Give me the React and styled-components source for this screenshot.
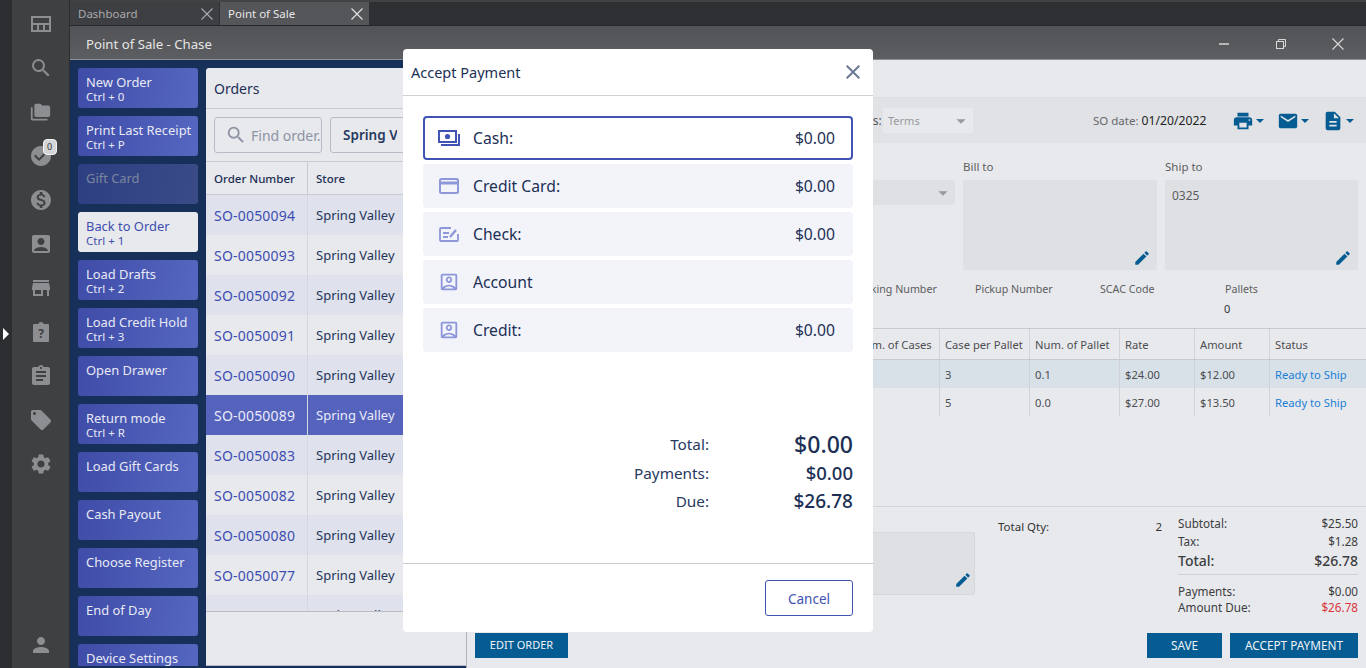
import styled, { createGlobalStyle } from "styled-components";
import {
  MdSearch, MdFolderCopy, MdCheckCircle, MdMonetizationOn, MdAccountBox, MdStore,
  MdAssignment, MdLocalOffer, MdSettings, MdPerson, MdClose, MdEdit, MdPrint, MdEmail,
  MdDescription, MdArrowDropDown, MdOutlineAccountBox
} from "react-icons/md";

const GlobalStyle = createGlobalStyle`
  html, body { margin: 0; padding: 0; overflow: hidden; background: #16305a; }
  * { box-sizing: border-box; }
  body { font-family: "Noto Sans", "Open Sans", sans-serif; }
`

const Page = styled.div`
  display: flex;
  width: 1366px;
  height: 668px;
  overflow: hidden;
  position: relative;
`
const Strip = styled.div`
  width: 12px;
  background: #2d2e32;
  position: relative;
`
const Arrow = styled.div`
  position: absolute;
  left: 3px;
  top: 328px;
  border-left: 6px solid #fff;
  border-top: 6px solid transparent;
  border-bottom: 6px solid transparent;
`
const Sidebar = styled.nav`
  width: 58px;
  background: #3f4042;
  border-right: 1px solid #2c2d30;
  display: flex;
  flex-direction: column;
  align-items: center;
  padding-top: 2px;
  color: #8d8e91;
`
const SideItem = styled.div`
  height: 44px;
  width: 44px;
  display: flex;
  align-items: center;
  justify-content: center;
  position: relative;
  font-size: 24px;
  margin-top: ${p => (p.$bottom ? "auto" : "0")};
  margin-bottom: ${p => (p.$bottom ? "1px" : "0")};
`
const Badge = styled.span`
  position: absolute;
  left: 24px;
  top: 5px;
  width: 14px;
  height: 16px;
  border-radius: 4px;
  background: #d4d5d8;
  border: 1px solid #f2f2f2;
  color: #333;
  font-size: 9px;
  line-height: 14px;
  text-align: center;
`
const Work = styled.div`
  flex: 1;
  display: flex;
  flex-direction: column;
  min-width: 0;
`
const TabBar = styled.div`
  height: 26px;
  background: #2f3034;
  border-top: 2px solid #424345;
  display: flex;
  border-bottom: 1px solid #26272a;
`
const Tab = styled.div`
  width: 149px;
  margin-right: 1px;
  background: ${p => (p.$active ? "#55565a" : "#3e3f42")};
  color: ${p => (p.$active ? "#e6e6e6" : "#a9aaad")};
  font-size: 11.5px;
  display: flex;
  align-items: center;
  justify-content: space-between;
  padding: 0 6px 0 8px;
`
const TitleBar = styled.div`
  height: 34px;
  background: linear-gradient(180deg, #525356, #5d5e61);
  color: #e6e6e6;
  font-size: 13.2px;
  display: flex;
  align-items: center;
  padding: 2px 0 0 16px;
  border-bottom: 1px solid #8f9093;
`
const WindowControls = styled.div`
  margin-left: auto;
  display: flex;
  align-items: center;
  gap: 45px;
  padding-right: 22px;
  color: #d8d8d8;
`
const Body = styled.div`
  flex: 1;
  display: flex;
  min-height: 0;
`
const ActionColumn = styled.div`
  width: 136px;
  height: 606px;
  overflow: hidden;
  padding: 8px 8px 0;
  background: #16305a;
`
const ActionButton = styled.div`
  height: 40px;
  margin-bottom: 8px;
  border-radius: 3px;
  padding: 6px 8px;
  white-space: nowrap;
  background: ${p => p.$active ? "#e8e9ed" : p.$disabled
    ? "linear-gradient(100deg, #2d3f82, #3a4b88)"
    : "linear-gradient(100deg, #3f4ca8, #5567c1)"};
  color: ${p => p.$active ? "#3e4eb0" : p.$disabled ? "#7c859e" : "#e8e9f4"};
  font-size: 12.9px;
  line-height: 16px;
`
const Shortcut = styled.div`
  font-size: 11.5px;
  line-height: 13px;
`
const OrdersWrap = styled.div`
  width: 260px;
  height: 608px;
  padding-top: 8px;
  background: #16305a;
  padding-bottom: 2px;
  display: flex;
`
const OrdersPanel = styled.section`
  width: 260px;
  flex: none;
  background: #e8e9ed;
  border-radius: 3px 0 0 0;
  border-bottom: 1px solid #b9bcc6;
  display: flex;
  flex-direction: column;
`
const OrdersTitle = styled.div`
  height: 41px;
  border-bottom: 1px solid #c9cbd3;
  padding-left: 8px;
  display: flex;
  align-items: center;
  font-size: 14px;
  color: #1c2f55;
`
const SearchRow = styled.div`
  height: 53px;
  padding: 8px 8px 0;
  display: flex;
  gap: 8px;
  border-bottom: 1px solid #c9cbd3;
`
const SearchBox = styled.div`
  width: 108px;
  flex: none;
  height: 36px;
  border: 1px solid #b8bcc8;
  border-radius: 3px;
  display: flex;
  align-items: center;
  padding-left: 10px;
  gap: 4px;
  color: #8d93a5;
  font-size: 14px;
  white-space: nowrap;
  overflow: hidden;
`
const StoreSelect = styled.div`
  width: 150px;
  flex: none;
  height: 36px;
  border: 1px solid #b8bcc8;
  border-radius: 3px;
  padding-left: 12px;
  display: flex;
  align-items: center;
`
const StoreText = styled.span`
  width: 54px;
  overflow: hidden;
  white-space: nowrap;
  color: #26395f;
  font-weight: 600;
  font-size: 13.5px;
`
const OrderHead = styled.div`
  display: grid;
  grid-template-columns: 101px 1fr;
  height: 33px;
  border-bottom: 1px solid #c9cbd3;
  font-size: 11.5px;
  font-weight: 500;
  color: #1c2f55;
`
const OrderHeadCell = styled.div`
  display: flex;
  align-items: center;
  padding-left: 8px;
  & + & { border-left: 1px solid #c9cbd3; }
`
const OrderList = styled.div`
  height: 417px;
  overflow: hidden;
  border-bottom: 1px solid #b9bcc6;
`
const OrderRow = styled.div`
  display: grid;
  grid-template-columns: 101px 1fr;
  height: 40px;
  font-size: 13px;
  background: ${p => (p.$selected ? "#5663bd" : p.$odd ? "#dfe1ec" : "#e8e9ed")};
  color: ${p => (p.$selected ? "#e9ebfa" : "#22355b")};
`
const OrderCell = styled.div`
  display: flex;
  align-items: center;
  padding-left: 8px;
  & + & { border-left: 1px solid #d5d7df; }
`
const OrderLink = styled.span`
  color: ${p => (p.$selected ? "#e9ebfa" : "#3e4eb0")};
  font-size: 14px;
  letter-spacing: 0.2px;
`
const Main = styled.main`
  flex: 1;
  min-width: 0;
  background: #e8e9ed;
  border-left: 1px solid #b2b3b7;
  display: flex;
  flex-direction: column;
  font-size: 12px;
  color: #4c4d50;
`
const TopStrip = styled.div`
  height: 37px;
`
const Toolbar = styled.div`
  height: 46px;
  background: #e1e2e6;
  display: flex;
  align-items: center;
  padding-left: 377px;
  border-top: 1px solid #dcdde1;
`
const TermsLabel = styled.span`
  width: 39px;
  flex: none;
  font-size: 12px;
  color: #57585b;
`
const Select = styled.div`
  height: 25px;
  flex: none;
  background: ${p => (p.$dark ? "#dfe0e4" : "#e8e9ed")};
  border-radius: 2px;
  color: #98999d;
  font-size: 11px;
  display: flex;
  align-items: center;
  justify-content: space-between;
  padding: 0 1px 0 5px;
  width: ${p => p.$width}px;
`
const DateLabel = styled.div`
  margin-left: 120px;
  width: 139px;
  flex: none;
  font-size: 11.5px;
  color: #66676a;
`
const DateValue = styled.span`
  color: #222;
  font-size: 12.2px;
`
const ToolIcon = styled.div`
  display: flex;
  align-items: center;
  flex: none;
  color: #045c92;
  font-size: 22px;
  width: 45px;
`
const Caret = styled.span`
  display: inline-block;
  margin-left: 2px;
  border-left: 4px solid transparent;
  border-right: 4px solid transparent;
  border-top: 4px solid #045c92;
`
const AddressGrid = styled.div`
  display: grid;
  grid-template-columns: 488px 194px 193px;
  gap: 8px;
  padding-top: 16px;
`
const AddressLabel = styled.div`
  font-size: 11.5px;
  line-height: 16px;
  height: 21px;
  color: #5c5d60;
`
const AddressBox = styled.div`
  height: 90px;
  background: #dfe0e4;
  position: relative;
  padding: 7px;
  font-size: 12px;
  color: #5c5d60;
`
const PencilSpot = styled.span`
  position: absolute;
  right: ${p => p.$right ?? 6}px;
  bottom: ${p => p.$bottom ?? 3}px;
  color: #045c92;
  font-size: 18px;
  display: flex;
`
const FieldGrid = styled.div`
  display: grid;
  grid-template-columns: repeat(4, 125px);
  padding: 11px 0 0 383px;
  height: 58px;
  font-size: 10.7px;
  line-height: 16px;
  color: #5c5d60;
`
const FieldValue = styled.div`
  margin: 4px 0 0 -1px;
  font-size: 11px;
  color: #333;
`
const TableRow = styled.div`
  display: grid;
  grid-template-columns: 383px 89px 90px 90px 75px 75px 96px;
  height: ${p => (p.$head ? "32px" : "28px")};
  background: ${p => (p.$tint ? "#d8e1e8" : "transparent")};
  border-top: ${p => (p.$head ? "1px solid #c9cacf" : "0")};
  border-bottom: ${p => (p.$head ? "1px solid #c9cacf" : "0")};
  font-size: 11.2px;
`
const TableCell = styled.div`
  display: flex;
  align-items: center;
  padding-left: 5px;
  white-space: nowrap;
  color: ${p => (p.$link ? "#1a7fd6" : "#4c4d50")};
  & + & { border-left: 1px solid #d2d3d8; }
`
const TableGap = styled.div`
  flex: 1;
`
const BottomPanel = styled.div`
  height: 124px;
  border-top: 1px solid #d2d3d8;
  display: flex;
  padding-right: 8px;
`
const NotesColumn = styled.div`
  width: 508px;
  padding-top: 25px;
`
const NotesBox = styled.div`
  height: 63px;
  background: #dfe0e4;
  border: 1px solid #d6d7db;
  border-radius: 2px;
  position: relative;
`
const QtyBlock = styled.div`
  width: 203px;
  padding: 12px 16px 0 23px;
  display: flex;
  justify-content: space-between;
  font-size: 11.5px;
  color: #333;
`
const Summary = styled.div`
  flex: 1;
  padding-top: 7px;
`
const SummaryRow = styled.div`
  display: flex;
  justify-content: space-between;
  align-items: center;
  height: ${p => (p.$big ? "21px" : p.$tight ? "16px" : "18px")};
  font-size: ${p => (p.$big ? "14px" : "11.7px")};
  font-weight: ${p => (p.$big ? 500 : 400)};
  color: #3c3d40;
`
const Red = styled.span`
  color: #d8343c;
`
const SummaryRule = styled.div`
  height: 1px;
  background: #cfd0d5;
  margin: 3px 0 8px;
`
const Footer = styled.div`
  height: 38px;
  padding: 3px 8px 0;
  display: flex;
  gap: 8px;
`
const SolidButton = styled.div`
  height: 25px;
  width: ${p => p.$width}px;
  margin-right: ${p => (p.$push ? "auto" : "0")};
  padding-bottom: 2px;
  background: #045c92;
  color: #eef3f7;
  font-size: ${p => (p.$push ? "11px" : "11.8px")};
  display: flex;
  align-items: center;
  justify-content: center;
`
const Modal = styled.div`
  position: absolute;
  left: 403px;
  top: 49px;
  width: 470px;
  height: 583px;
  background: #fff;
  border-radius: 4px;
  display: flex;
  flex-direction: column;
  color: #1c2f55;
`
const ModalHeader = styled.header`
  height: 47px;
  border-bottom: 1px solid #d0d2d8;
  display: flex;
  align-items: center;
  justify-content: space-between;
  padding: 0 8px;
  font-size: 14.5px;
  color: #1c2f55;
`
const CloseIcon = styled.span`
  display: flex;
  font-size: 24px;
  color: #6b7a90;
`
const PaymentList = styled.div`
  padding: 20px 20px 0;
  display: flex;
  flex-direction: column;
  gap: 4px;
`
const PaymentRow = styled.div`
  height: 44px;
  border-radius: 4px;
  background: ${p => (p.$active ? "#fff" : "#f3f4fa")};
  border: ${p => (p.$active ? "2px solid #4153b3" : "0")};
  display: flex;
  align-items: center;
  padding: ${p => (p.$active ? "0 16px 0 13px" : "0 18px 0 15px")};
  font-size: 15.7px;
`
const PayIcon = styled.span`
  width: 22px;
  margin-right: 13px;
  display: flex;
  justify-content: center;
  color: ${p => (p.$active ? "#4153b3" : "#8e97d9")};
`
const PayAmount = styled.span`
  margin-left: auto;
`
const Totals = styled.div`
  margin-top: 76px;
  padding-right: 20px;
  display: flex;
  flex-direction: column;
  flex: 1;
`
const TotalRow = styled.div`
  display: grid;
  grid-template-columns: 306px 1fr;
  align-items: center;
  height: ${p => p.$height}px;
  font-size: 15.3px;
`
const TotalLabel = styled.div`
  text-align: right;
  color: #26395f;
`
const TotalValue = styled.div`
  text-align: right;
  font-size: ${p => p.$size}px;
  font-weight: 500;
`
const ModalFooter = styled.footer`
  height: 69px;
  border-top: 1px solid #c8cad0;
  padding: 16px 20px 0;
  display: flex;
  justify-content: flex-end;
`
const CancelButton = styled.div`
  width: 88px;
  height: 36px;
  border: 1px solid #4153b3;
  border-radius: 3px;
  color: #4153b3;
  font-size: 13.5px;
  padding-top: 2px;
  display: flex;
  align-items: center;
  justify-content: center;
`

function QuiltIcon() {
  return (
    <svg width="20" height="16" viewBox="0 0 20 16" fill="none" stroke="currentColor" strokeWidth="2">
      <rect x="1" y="1" width="18" height="14" />
      <path d="M1 8h18M7 8v7M13 8v7" />
    </svg>
  );
}

function QuestionClip() {
  return (
    <svg width="24" height="24" viewBox="0 0 24 24" fill="currentColor">
      <path d="M5 4h4.2a3 3 0 0 1 5.6 0H19a1 1 0 0 1 1 1v16a1 1 0 0 1-1 1H5a1 1 0 0 1-1-1V5a1 1 0 0 1 1-1z" />
      <text x="12" y="18" fontSize="12" fontWeight="700" textAnchor="middle" fill="#3f4042">?</text>
    </svg>
  );
}

function CashIcon() {
  return (
    <svg width="22" height="16" viewBox="0 0 22 16" fill="none" stroke="currentColor" strokeWidth="2">
      <rect x="1" y="1" width="17" height="11" />
      <circle cx="9.5" cy="6.5" r="2.6" fill="currentColor" stroke="none" />
      <path d="M3 15h18V4" />
    </svg>
  );
}

function CardIcon() {
  return (
    <svg width="20" height="16" viewBox="0 0 20 16" fill="none" stroke="currentColor" strokeWidth="2">
      <rect x="1" y="1" width="18" height="14" rx="1.5" />
      <path d="M1 5h18" strokeWidth="3" />
    </svg>
  );
}

function CheckIcon() {
  return (
    <svg width="20" height="15" viewBox="0 0 20 15" fill="none" stroke="currentColor" strokeWidth="1.8">
      <path d="M12 1H2a1 1 0 0 0-1 1v11a1 1 0 0 0 1 1h16a1 1 0 0 0 1-1V7" />
      <path d="M4 6h6M4 10h5" />
      <path d="M11 10l6-7" strokeWidth="2.4" />
    </svg>
  );
}

function ThinClose() {
  return (
    <svg width="12" height="12" viewBox="0 0 12 12" stroke="currentColor" fill="none">
      <path d="M0.5 0.5l11 11M11.5 0.5l-11 11" strokeWidth="1.1" />
    </svg>
  );
}

const actions = [
  { title: "New Order", shortcut: "Ctrl + 0" },
  { title: "Print Last Receipt", shortcut: "Ctrl + P" },
  { title: "Gift Card", disabled: true },
  { title: "Back to Order", shortcut: "Ctrl + 1", active: true },
  { title: "Load Drafts", shortcut: "Ctrl + 2" },
  { title: "Load Credit Hold", shortcut: "Ctrl + 3" },
  { title: "Open Drawer" },
  { title: "Return mode", shortcut: "Ctrl + R" },
  { title: "Load Gift Cards" },
  { title: "Cash Payout" },
  { title: "Choose Register" },
  { title: "End of Day" },
  { title: "Device Settings" },
];

const orders = ["0094", "0093", "0092", "0091", "0090", "0089", "0083", "0082", "0080", "0077", "0055"];

const payments = [
  { label: "Cash:", amount: "$0.00", icon: <CashIcon />, active: true },
  { label: "Credit Card:", amount: "$0.00", icon: <CardIcon /> },
  { label: "Check:", amount: "$0.00", icon: <CheckIcon /> },
  { label: "Account", icon: <MdOutlineAccountBox size={22} /> },
  { label: "Credit:", amount: "$0.00", icon: <MdOutlineAccountBox size={22} /> },
];

const lines = [
  ["3", "0.1", "$24.00", "$12.00"],
  ["5", "0.0", "$27.00", "$13.50"],
];

function App() {
  return (
    <Page>
      <GlobalStyle />
      <Strip><Arrow /></Strip>
      <Sidebar>
        <SideItem><QuiltIcon /></SideItem>
        <SideItem><MdSearch /></SideItem>
        <SideItem><MdFolderCopy size={21} /></SideItem>
        <SideItem><MdCheckCircle /><Badge>0</Badge></SideItem>
        <SideItem><MdMonetizationOn /></SideItem>
        <SideItem><MdAccountBox /></SideItem>
        <SideItem><MdStore /></SideItem>
        <SideItem><QuestionClip /></SideItem>
        <SideItem><MdAssignment /></SideItem>
        <SideItem><MdLocalOffer /></SideItem>
        <SideItem><MdSettings /></SideItem>
        <SideItem $bottom><MdPerson /></SideItem>
      </Sidebar>
      <Work>
        <TabBar>
          <Tab>Dashboard <ThinClose /></Tab>
          <Tab $active>Point of Sale <ThinClose /></Tab>
        </TabBar>
        <TitleBar>
          Point of Sale - Chase
          <WindowControls>
            <svg width="12" height="12" viewBox="0 0 12 12" stroke="currentColor" fill="none"><path d="M1 6h10" strokeWidth="1.5" /></svg>
            <svg width="12" height="12" viewBox="0 0 12 12" stroke="currentColor" fill="none"><rect x="1.5" y="3.5" width="7" height="7" /><path d="M3.5 3V1.5h7v7H9" /></svg>
            <ThinClose />
          </WindowControls>
        </TitleBar>
        <Body>
          <ActionColumn>
            {actions.map(a => (
              <ActionButton key={a.title} $active={a.active} $disabled={a.disabled}>
                {a.title}
                {a.shortcut && <Shortcut>{a.shortcut}</Shortcut>}
              </ActionButton>
            ))}
          </ActionColumn>
          <OrdersWrap>
            <OrdersPanel>
              <OrdersTitle>Orders</OrdersTitle>
              <SearchRow>
                <SearchBox><MdSearch size={22} style={{ flex: "none" }} />Find order..</SearchBox>
                <StoreSelect><StoreText>Spring Valley</StoreText></StoreSelect>
              </SearchRow>
              <OrderHead>
                <OrderHeadCell>Order Number</OrderHeadCell>
                <OrderHeadCell>Store</OrderHeadCell>
              </OrderHead>
              <OrderList>
                {orders.map((o, i) => (
                  <OrderRow key={o} $odd={i % 2 === 0} $selected={o === "0089"}>
                    <OrderCell><OrderLink $selected={o === "0089"}>SO-005{o}</OrderLink></OrderCell>
                    <OrderCell>Spring Valley</OrderCell>
                  </OrderRow>
                ))}
              </OrderList>
            </OrdersPanel>
          </OrdersWrap>
          <Main>
            <TopStrip />
            <Toolbar>
              <TermsLabel>Terms:</TermsLabel>
              <Select $width={90}>Terms <MdArrowDropDown size={22} /></Select>
              <DateLabel>SO date: <DateValue>01/20/2022</DateValue></DateLabel>
              <ToolIcon><MdPrint /><Caret /></ToolIcon>
              <ToolIcon><MdEmail /><Caret /></ToolIcon>
              <ToolIcon><MdDescription /><Caret /></ToolIcon>
            </Toolbar>
            <AddressGrid>
              <div>
                <AddressLabel>&nbsp;</AddressLabel>
                <Select $dark $width={488}>&nbsp;<MdArrowDropDown size={22} /></Select>
              </div>
              <div>
                <AddressLabel>Bill to</AddressLabel>
                <AddressBox><PencilSpot><MdEdit /></PencilSpot></AddressBox>
              </div>
              <div>
                <AddressLabel>Ship to</AddressLabel>
                <AddressBox>0325<PencilSpot><MdEdit /></PencilSpot></AddressBox>
              </div>
            </AddressGrid>
            <FieldGrid>
              <div>Tracking Number</div>
              <div>Pickup Number</div>
              <div>SCAC Code</div>
              <div>Pallets<FieldValue>0</FieldValue></div>
            </FieldGrid>
            <TableRow $head>
              <TableCell />
              <TableCell>Num. of Cases</TableCell>
              <TableCell>Case per Pallet</TableCell>
              <TableCell>Num. of Pallet</TableCell>
              <TableCell>Rate</TableCell>
              <TableCell>Amount</TableCell>
              <TableCell>Status</TableCell>
            </TableRow>
            {lines.map((l, i) => (
              <TableRow key={l[2]} $tint={i === 0}>
                <TableCell />
                <TableCell />
                {l.map(v => <TableCell key={v}>{v}</TableCell>)}
                <TableCell $link>Ready to Ship</TableCell>
              </TableRow>
            ))}
            <TableGap />
            <BottomPanel>
              <NotesColumn>
                <NotesBox><PencilSpot $right={2} $bottom={5}><MdEdit /></PencilSpot></NotesBox>
              </NotesColumn>
              <QtyBlock><span>Total Qty:</span><span>2</span></QtyBlock>
              <Summary>
                <SummaryRow><span>Subtotal:</span><span>$25.50</span></SummaryRow>
                <SummaryRow><span>Tax:</span><span>$1.28</span></SummaryRow>
                <SummaryRow $big><span>Total:</span><span>$26.78</span></SummaryRow>
                <SummaryRule />
                <SummaryRow $tight><span>Payments:</span><span>$0.00</span></SummaryRow>
                <SummaryRow $tight><span>Amount Due:</span><Red>$26.78</Red></SummaryRow>
              </Summary>
            </BottomPanel>
            <Footer>
              <SolidButton $width={93} $push>EDIT ORDER</SolidButton>
              <SolidButton $width={75}>SAVE</SolidButton>
              <SolidButton $width={128}>ACCEPT PAYMENT</SolidButton>
            </Footer>
          </Main>
        </Body>
      </Work>
      <Modal>
        <ModalHeader>
          Accept Payment
          <CloseIcon><MdClose /></CloseIcon>
        </ModalHeader>
        <PaymentList>
          {payments.map(p => (
            <PaymentRow key={p.label} $active={p.active}>
              <PayIcon $active={p.active}>{p.icon}</PayIcon>
              {p.label}
              {p.amount && <PayAmount>{p.amount}</PayAmount>}
            </PaymentRow>
          ))}
        </PaymentList>
        <Totals>
          <TotalRow $height={30}><TotalLabel>Total:</TotalLabel><TotalValue $size={23}>$0.00</TotalValue></TotalRow>
          <TotalRow $height={29}><TotalLabel>Payments:</TotalLabel><TotalValue $size={18.5}>$0.00</TotalValue></TotalRow>
          <TotalRow $height={28}><TotalLabel>Due:</TotalLabel><TotalValue $size={19}>$26.78</TotalValue></TotalRow>
        </Totals>
        <ModalFooter><CancelButton>Cancel</CancelButton></ModalFooter>
      </Modal>
    </Page>
  );
}

export default App;
